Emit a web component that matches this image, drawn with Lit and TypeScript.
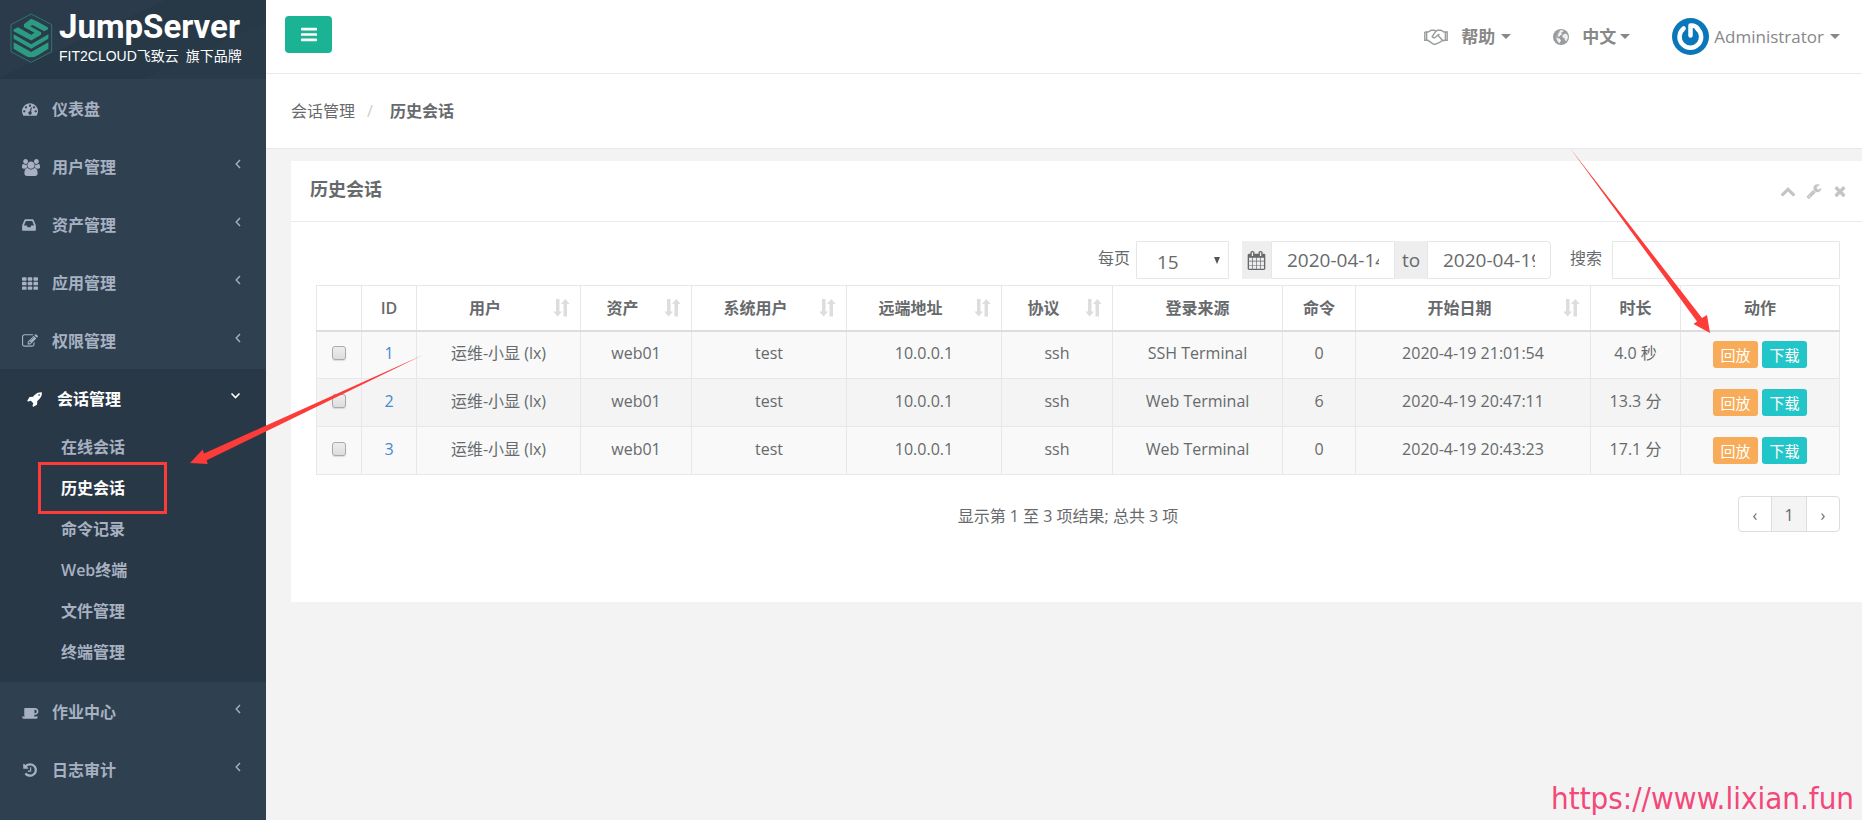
import { LitElement, html, css, svg, nothing } from "lit";
import { customElement, property, state } from "lit/decorators.js";
import { classMap } from "lit/directives/class-map.js";

const ICONS: Record<string, { w: number; d: string }> = {
  dashboard: { w: 1792, d: "M384 1152q0-53-37.5-90.5t-90.5-37.5-90.5 37.5-37.5 90.5 37.5 90.5 90.5 37.5 90.5-37.5 37.5-90.5zm192-448q0-53-37.5-90.5t-90.5-37.5-90.5 37.5-37.5 90.5 37.5 90.5 90.5 37.5 90.5-37.5 37.5-90.5zm428 481l101-382q6-26-7.5-48.5t-38.5-29.5-48 6.5-30 39.5l-101 382q-60 5-107 43.5t-63 98.5q-20 77 20 146t117 89 146-20 89-117q16-60-6-117t-72-91zm660-33q0-53-37.5-90.5t-90.5-37.5-90.5 37.5-37.5 90.5 37.5 90.5 90.5 37.5 90.5-37.5 37.5-90.5zm-640-640q0-53-37.5-90.5t-90.5-37.5-90.5 37.5-37.5 90.5 37.5 90.5 90.5 37.5 90.5-37.5 37.5-90.5zm448 192q0-53-37.5-90.5t-90.5-37.5-90.5 37.5-37.5 90.5 37.5 90.5 90.5 37.5 90.5-37.5 37.5-90.5zm320 448q0 261-141 483-19 29-54 29h-1402q-35 0-54-29-141-221-141-483 0-182 71-348t191-286 286-191 348-71 348 71 286 191 191 286 71 348z" },
  users: { w: 1920, d: "M593 896q-162 5-265 128h-134q-82 0-138-40.5t-56-118.5q0-353 124-353 6 0 43.5 21t97.5 42.5 119 21.5q67 0 133-23-5 37-5 66 0 143 81 256zm1071 637q0 120-73 189.5t-194 69.5h-874q-121 0-194-69.5t-73-189.5q0-53 3.5-103.5t14-109 26.5-108.5 43-97.5 62-81 85.5-53.5 111.5-20q10 0 43 21.5t73 48 107 48 135 21.5 135-21.5 107-48 73-48 43-21.5q61 0 111.5 20t85.5 53.5 62 81 43 97.5 26.5 108.5 14 109 3.5 103.5zm-1024-1277q0 106-75 181t-181 75-181-75-75-181 75-181 181-75 181 75 75 181zm704 384q0 159-112.5 271.5t-271.5 112.5-271.5-112.5-112.5-271.5 112.5-271.5 271.5-112.5 271.5 112.5 112.5 271.5zm576 225q0 78-56 118.5t-138 40.5h-134q-103-123-265-128 81-113 81-256 0-29-5-66 66 23 133 23 59 0 119-21.5t97.5-42.5 43.5-21q124 0 124 353zm-128-609q0 106-75 181t-181 75-181-75-75-181 75-181 181-75 181 75 75 181z" },
  inbox: { w: 1536, d: "M1023 960h316q-1-3-2.5-8t-2.5-8l-212-496h-708l-212 496q-1 2-2.5 8t-2.5 8h316l95 192h320zm513 30v482q0 26-19 45t-45 19h-1408q-26 0-45-19t-19-45v-482q0-62 25-123l238-552q10-25 36.5-42t52.5-17h832q26 0 52.5 17t36.5 42l238 552q25 61 25 123z" },
  grid: { w: 1792, d: "M96 256h320q96 0 96 96v192q0 96-96 96h-320q-96 0-96-96v-192q0-96 96-96zm640 0h320q96 0 96 96v192q0 96-96 96h-320q-96 0-96-96v-192q0-96 96-96zm640 0h320q96 0 96 96v192q0 96-96 96h-320q-96 0-96-96v-192q0-96 96-96zM96 768h320q96 0 96 96v192q0 96-96 96h-320q-96 0-96-96v-192q0-96 96-96zm640 0h320q96 0 96 96v192q0 96-96 96h-320q-96 0-96-96v-192q0-96 96-96zm640 0h320q96 0 96 96v192q0 96-96 96h-320q-96 0-96-96v-192q0-96 96-96zM96 1280h320q96 0 96 96v192q0 96-96 96h-320q-96 0-96-96v-192q0-96 96-96zm640 0h320q96 0 96 96v192q0 96-96 96h-320q-96 0-96-96v-192q0-96 96-96zm640 0h320q96 0 96 96v192q0 96-96 96h-320q-96 0-96-96v-192q0-96 96-96z" },
  edit: { w: 1792, d: "M888 1184l116-116-152-152-116 116v56h96v96h56zm440-720q-16-16-33 1l-350 350q-17 17-1 33t33-1l350-350q17-17 1-33zm80 594v190q0 119-84.5 203.5t-203.5 84.5h-832q-119 0-203.5-84.5t-84.5-203.5v-832q0-119 84.5-203.5t203.5-84.5h832q63 0 117 25 15 7 18 23 3 17-9 29l-49 49q-14 14-32 8-23-6-45-6h-832q-66 0-113 47t-47 113v832q0 66 47 113t113 47h832q66 0 113-47t47-113v-126q0-13 9-22l64-64q15-15 35-7t20 29zm-96-738l288 288-672 672h-288v-288zm444 132l-92 92-288-288 92-92q28-28 68-28t68 28l152 152q28 28 28 68t-28 68z" },
  rocket: { w: 1664, d: "M1440 448q0-40-28-68t-68-28-68 28-28 68 28 68 68 28 68-28 28-68zm224-288q0 249-75.5 430.5t-253.5 360.5q-81 80-195 176l-20 379q-2 16-16 26l-384 224q-7 4-16 4-12 0-23-9l-64-64q-13-14-8-32l85-276-281-281-276 85q-3 1-9 1-14 0-23-9l-64-64q-17-19-5-39l224-384q10-14 26-16l379-20q96-114 176-195 188-187 358-258t431-71q14 0 24 9.5t10 22.5z" },
  coffee: { w: 1920, d: "M1664 832q0-80-56-136t-136-56h-64v384h64q80 0 136-56t56-136zm-1664 576h1792q0 106-75 181t-181 75h-1280q-106 0-181-75t-75-181zm1856-576q0 159-112.5 271.5t-271.5 112.5h-64v32q0 92-66 158t-158 66h-704q-92 0-158-66t-66-158v-736q0-26 19-45t45-19h1152q159 0 271.5 112.5t112.5 271.5z" },
  history: { w: 1664, d: "M1664 896q0 156-61 298t-164 245-245 164-298 61q-172 0-327-72.5t-264-204.5q-7-10-6.5-22.5t8.5-20.5l137-138q10-9 25-9 16 2 23 12 73 95 179 147t225 52q104 0 198.5-40.5t163.5-109.5 109.5-163.5 40.5-198.5-40.5-198.5-109.5-163.5-163.5-109.5-198.5-40.5q-98 0-188 35.5t-160 101.5l137 138q31 30 14 69-17 40-59 40h-448q-26 0-45-19t-19-45v-448q0-42 40-59 39-17 69 14l130 129q107-101 244.5-156.5t284.5-55.5q156 0 298 61t245 164 164 245 61 298zm-640-288v448q0 14-9 23t-23 9h-320q-14 0-23-9t-9-23v-64q0-14 9-23t23-9h224v-352q0-14 9-23t23-9h64q14 0 23 9t9 23z" },
  wrench: { w: 1792, d: "M448 1472q0-26-19-45t-45-19-45 19-19 45 19 45 45 19 45-19 19-45zm644-420l-682 682q-37 37-90 37-52 0-91-37l-106-108q-38-36-38-90 0-53 38-91l681-681q39 98 114.5 173.5t173.5 114.5zm634-435q0 39-23 106-47 134-164.5 217.5t-258.5 83.5q-185 0-316.5-131.5t-131.5-316.5 131.5-316.5 316.5-131.5q58 0 121.5 16.5t107.5 46.5q16 11 16 28t-16 28l-293 169v224l193 107q5-3 79-48.5t135.5-81 70.5-35.5q15 0 23.5 10t8.5 25z" },
  times: { w: 1792, d: "M1490 1322q0 40-28 68l-136 136q-28 28-68 28t-68-28l-294-294-294 294q-28 28-68 28t-68-28l-136-136q-28-28-28-68t28-68l294-294-294-294q-28-28-28-68t28-68l136-136q28-28 68-28t68 28l294 294 294-294q28-28 68-28t68 28l136 136q28 28 28 68t-28 68l-294 294 294 294q28 28 28 68z" },
  up: { w: 1792, d: "M1683 1331l-166 165q-19 19-45 19t-45-19l-531-531-531 531q-19 19-45 19t-45-19l-166-165q-19-19-19-45.5t19-45.5l742-741q19-19 45-19t45 19l742 741q19 19 19 45.5t-19 45.5z" },
  calendar: { w: 1792, d: "M192 1664h288v-288h-288v288zm352 0h320v-288h-320v288zm-352-352h288v-320h-288v320zm352 0h320v-320h-320v320zm-352-384h288v-288h-288v288zm736 736h320v-288h-320v288zm-384-736h320v-288h-320v288zm768 736h288v-288h-288v288zm-384-352h320v-320h-320v320zm-352-864v-288q0-13-9.5-22.5t-22.5-9.5h-64q-13 0-22.5 9.5t-9.5 22.5v288q0 13 9.5 22.5t22.5 9.5h64q13 0 22.5-9.5t9.5-22.5zm736 864h288v-320h-288v320zm-384-384h320v-288h-320v288zm384 0h288v-288h-288v288zm32-480v-288q0-13-9.5-22.5t-22.5-9.5h-64q-13 0-22.5 9.5t-9.5 22.5v288q0 13 9.5 22.5t22.5 9.5h64q13 0 22.5-9.5t9.5-22.5zm384-64v1280q0 52-38 90t-90 38h-1408q-52 0-90-38t-38-90v-1280q0-52 38-90t90-38h128v-96q0-66 47-113t113-47h64q66 0 113 47t47 113v96h384v-96q0-66 47-113t113-47h64q66 0 113 47t47 113v96h128q52 0 90 38t38 90z" },
  bars: { w: 1536, d: "M64 256h1408q64 0 64 64v128q0 64-64 64h-1408q-64 0-64-64v-128q0-64 64-64zM64 768h1408q64 0 64 64v128q0 64-64 64h-1408q-64 0-64-64v-128q0-64 64-64zM64 1280h1408q64 0 64 64v128q0 64-64 64h-1408q-64 0-64-64v-128q0-64 64-64z" },
};

/** Icon glyph; its height is the font size, its width follows the glyph. */
function icon(name: string, size = 16) {
  const i = ICONS[name];
  return html`<svg
    class="ico"
    width=${Math.round((size * i.w) / 1792)}
    height=${size}
    viewBox="0 0 ${i.w} 1792"
    aria-hidden="true"
  >${svg`<path fill="currentColor" d=${i.d}></path>`}</svg>`;
}

const FONT = css`
  :host {
    font-family: "Open Sans", "Noto Sans", "Noto Sans CJK SC", sans-serif;
    font-size: 16px;
    line-height: 24px;
    color: #676a6c;
  }
  *,
  *::before,
  *::after {
    box-sizing: border-box;
  }
  a {
    color: inherit;
    text-decoration: none;
  }
  button,
  input,
  select {
    font: inherit;
    color: inherit;
    margin: 0;
  }
  button {
    cursor: pointer;
    border: 0;
    padding: 0;
    background: none;
  }
  ul {
    list-style: none;
    margin: 0;
    padding: 0;
  }
  .ico {
    display: block;
    flex: none;
  }
`;

interface MenuEntry {
  label: string;
  icon: string;
  children?: string[];
  leaf?: boolean;
}

const MENU: MenuEntry[] = [
  { label: "仪表盘", icon: "dashboard", leaf: true },
  { label: "用户管理", icon: "users" },
  { label: "资产管理", icon: "inbox" },
  { label: "应用管理", icon: "grid" },
  { label: "权限管理", icon: "edit" },
  {
    label: "会话管理",
    icon: "rocket",
    children: ["在线会话", "历史会话", "命令记录", "Web终端", "文件管理", "终端管理"],
  },
  { label: "作业中心", icon: "coffee" },
  { label: "日志审计", icon: "history" },
];

@customElement("side-menu")
export class SideMenu extends LitElement {
  @property() current = "历史会话";

  static styles = [
    FONT,
    css`
      :host {
        display: block;
        background: #2f4050;
        color: #a7b1c2;
        font-weight: 600;
      }
      .brand {
        display: flex;
        gap: 6px;
        height: 79px;
        padding: 7px 10px;
        color: #fff;
        background: linear-gradient(155deg, #2b3b4b 0 38%, #273847 38% 72%, #293a49 72%);
      }
      .mark {
        flex: none;
        margin-top: 6px;
      }
      .words {
        display: flex;
        flex-direction: column;
      }
      .name {
        font: 700 33px/40px Roboto, sans-serif;
      }
      .tag {
        display: flex;
        gap: 7px;
        font: 400 14px/18px "Liberation Sans", "Noto Sans CJK SC", sans-serif;
      }
      .item {
        display: flex;
        align-items: center;
        height: 58px;
        padding: 2px 25px 0 22px;
      }
      .glyph {
        width: 30px;
      }
      .label {
        flex: 1;
      }
      .arrow {
        margin-bottom: 6px;
      }
      .open {
        background: #293846;
        padding-bottom: 9px;
      }
      .open .item {
        color: #fff;
        padding-left: 27px;
      }
      .sub {
        display: flex;
        align-items: center;
        position: relative;
        height: 41px;
        padding: 0 0 2px 61px;
      }
      .sub.on {
        color: #fff;
      }
      .frame {
        position: absolute;
        inset: -6px auto -5px 38px;
        width: 129px;
        border: 3px solid #fd3b38;
      }
    `,
  ];

  private sub(label: string) {
    const on = label === this.current;
    return html`<li>
      <a class=${classMap({ sub: true, on })} href="#">
        ${label}${on ? html`<span class="frame"></span>` : nothing}
      </a>
    </li>`;
  }

  render() {
    return html`
      <div class="brand">
        <svg class="mark" width="43" height="50" viewBox="17 13 128 151" aria-hidden="true">
          <path d="M80 16 142 48V130L80 162 19 130V48Z" fill="none" stroke="#2a8577" stroke-width="2.5" />
          <path
            d="M27 63 40 56 80 79 90 73 58 55 58 47 80 30 97 38 131 57 131 62 119 68 84 49 77 53 110 71 110 79 80 96 27 68Z"
            fill="#2b9c82"
          />
          <path
            d="M27 77 80 107 132 77V91L80 121 27 91ZM27 101 80 131 132 101V121L104 138Q80 155 56 138L27 121Z"
            fill="#2b9c82"
          />
        </svg>
        <div class="words">
          <span class="name">JumpServer</span>
          <span class="tag"><span>FIT2CLOUD飞致云</span><span>旗下品牌</span></span>
        </div>
      </div>
      <nav>
        <ul>
          ${MENU.map(
            (m) => html`<li class=${classMap({ open: !!m.children })}>
              <a class="item" href="#">
                <span class="glyph">${icon(m.icon, m.icon === "users" ? 17 : 16)}</span>
                <span class="label">${m.label}</span>
                ${m.leaf
                  ? nothing
                  : m.children
                    ? html`<svg class="arrow" width="11" height="8" viewBox="0 0 11 8" aria-hidden="true">
                        <path d="M1.5 1.5 5.5 5.5 9.5 1.5" fill="none" stroke="currentColor" stroke-width="1.6" />
                      </svg>`
                    : html`<svg class="arrow" width="6" height="10" viewBox="0 0 6 10" aria-hidden="true">
                        <path d="M5 1 1.2 5 5 9" fill="none" stroke="currentColor" stroke-width="1.4" />
                      </svg>`}
              </a>
              ${m.children ? html`<ul>${m.children.map((c) => this.sub(c))}</ul>` : nothing}
            </li>`,
          )}
        </ul>
      </nav>
    `;
  }
}

@customElement("top-bar")
export class TopBar extends LitElement {
  static styles = [
    FONT,
    css`
      :host {
        display: flex;
        align-items: center;
        justify-content: space-between;
        height: 74px;
        padding: 0 22px 0 19px;
        background: #fff;
        border-bottom: 1px solid #e7eaec;
        color: #888;
      }
      .toggle {
        display: flex;
        align-items: center;
        justify-content: center;
        width: 47px;
        height: 37px;
        margin-bottom: 4px;
        border-radius: 4px;
        background: #1ab394;
        color: #fff;
      }
      .links {
        display: flex;
        align-items: center;
        gap: 42px;
      }
      .link {
        display: flex;
        align-items: center;
        font-size: 17px;
        font-weight: 700;
      }
      .lead {
        margin-right: 13px;
        color: #999c9e;
      }
      .caret {
        margin-left: 6px;
        border: 5px solid transparent;
        border-top-color: currentColor;
        border-bottom: 0;
      }
      .tight {
        margin-left: 4px;
      }
      .user {
        font-weight: 400;
      }
      .avatar {
        margin-right: 5px;
      }
    `,
  ];

  render() {
    return html`
      <button class="toggle" aria-label="菜单">${icon("bars", 19)}</button>
      <div class="links">
        <a class="link" href="#">
          <svg class="lead" width="24" height="16" viewBox="0 0 24 16" fill="none" stroke="currentColor" stroke-width="1.4" aria-hidden="true">
            <path d="M.8 3H4L7.2 1.3H10.300L12 2.200 13.600 1.200H17L20 3H23.200V11.300H20.400L18.500 12" />
            <path d="M.8 3V11.300H3.800L9 14.800Q11.500 16 13.500 14.300L16 13.200 18.500 11.200 13.800 6.300 11.400 8.300Q9.500 9.500 8.200 7.600L12 2.200" />
            <path d="M13.800 6.300 15.500 5M2.600 3V11M21.400 3V11" />
          </svg>
          帮助<span class="caret"></span>
        </a>
        <a class="link" href="#">
          <svg class="lead" width="16" height="16" viewBox="0 0 16 16" aria-hidden="true">
            <circle cx="8" cy="8" r="8" fill="currentColor" />
            <path
              d="M6 1.600 9.500 1 11 2 9.800 3.200 8 3.400 9 5.200 7.300 6.300 6.300 8 4.800 8.200 6.800 9.800 7.400 11 6 13.600 5 12.500 4.600 10.400 3 8.600Z"
              fill="#fff"
              fill-opacity=".25"
            />
            <path
              d="M7.500 1.200 10.500 1.500 9.500 3 8 3.400 9 5.200 7.300 6.300 6.500 7.500 4.800 6.800 5.600 4.800ZM10.300 5.500 12.600 4.600 14.600 6 14.900 9 13.300 12 11.900 11.400 11.600 9.200 9.800 8.600 9.300 6.800ZM3 9 6.800 9.800 8 11.500 6.600 14.300 5 13Z"
              fill="#fff"
              fill-opacity=".85"
            />
          </svg>
          中文<span class="caret tight"></span>
        </a>
        <a class="link user" href="#">
          <svg class="avatar" width="37" height="37" viewBox="0 0 37 37" aria-hidden="true">
            <circle cx="18.500" cy="18.500" r="18.500" fill="#0a77bb" />
            <path d="M12 10.500A10.800 10.800 0 1 0 25.500 10.500" transform="translate(-.4 0)" fill="none" stroke="#fff" stroke-width="4.500" stroke-linecap="round" />
            <path d="M18.500 7.500V17.500M18.500 7.500Q23.500 7 26 11" fill="none" stroke="#fff" stroke-width="4.500" stroke-linecap="round" />
          </svg>
          Administrator<span class="caret"></span>
        </a>
      </div>
    `;
  }
}

interface Session {
  id: number;
  cells: string[];
}

const COLUMNS: { title: string; width: number; sort?: boolean }[] = [
  { title: "", width: 45 },
  { title: "ID", width: 55 },
  { title: "用户", width: 164, sort: true },
  { title: "资产", width: 111, sort: true },
  { title: "系统用户", width: 155, sort: true },
  { title: "远端地址", width: 155, sort: true },
  { title: "协议", width: 111, sort: true },
  { title: "登录来源", width: 170 },
  { title: "命令", width: 73 },
  { title: "开始日期", width: 235, sort: true },
  { title: "时长", width: 90 },
  { title: "动作", width: 159 },
];
const TOTAL = COLUMNS.reduce((sum, c) => sum + c.width, 0);

const SESSIONS: Session[] = [
  { id: 1, cells: ["运维-小显 (lx)", "web01", "test", "10.0.0.1", "ssh", "SSH Terminal", "0", "2020-4-19 21:01:54", "4.0 秒"] },
  { id: 2, cells: ["运维-小显 (lx)", "web01", "test", "10.0.0.1", "ssh", "Web Terminal", "6", "2020-4-19 20:47:11", "13.3 分"] },
  { id: 3, cells: ["运维-小显 (lx)", "web01", "test", "10.0.0.1", "ssh", "Web Terminal", "0", "2020-4-19 20:43:23", "17.1 分"] },
];

@customElement("session-panel")
export class SessionPanel extends LitElement {
  @state() private rows = SESSIONS;

  static styles = [
    FONT,
    css`
      :host {
        display: block;
        background: #fff;
      }
      .head {
        display: flex;
        align-items: center;
        justify-content: space-between;
        height: 61px;
        padding: 0 14px 4px 19px;
        border-bottom: 1px solid #e7eaec;
      }
      .title {
        margin: 0;
        font-size: 18px;
        font-weight: 600;
      }
      .tools {
        display: flex;
        align-items: center;
        gap: 10px;
        padding-top: 4px;
        color: #c4c4c4;
      }
      .body {
        padding: 19px 22px 70px 25px;
      }
      .filters {
        display: flex;
        justify-content: flex-end;
        margin-bottom: 6px;
      }
      .filters label {
        margin: 5px 6px 0 0;
      }
      .filters .find {
        margin: 5px 10px 0 19px;
      }
      .box {
        height: 38px;
        background: #fff;
        border: 1px solid #e5e6e7;
        border-radius: 1px;
        padding: 0 15px;
        font-size: 19px;
      }
      .pick {
        position: relative;
        margin-right: 13px;
      }
      .pick .box {
        appearance: none;
        width: 93px;
        padding: 4px 20px 0;
        line-height: 28px;
      }
      .pick::after {
        content: "";
        position: absolute;
        right: 9px;
        top: 16px;
        border: 3px solid transparent;
        border-width: 7px 3px 0;
        border-top-color: #555;
        pointer-events: none;
      }
      .range {
        display: flex;
      }
      .range .box {
        width: 124px;
      }
      .range .box:last-child {
        border-radius: 0 4px 4px 0;
      }
      .addon {
        display: flex;
        align-items: center;
        justify-content: center;
        height: 38px;
        background: #eee;
        font-size: 19px;
      }
      .cal {
        width: 29px;
      }
      .to {
        width: 32px;
      }
      .search {
        width: 228px;
      }
      table {
        width: 100%;
        table-layout: fixed;
        border-collapse: collapse;
        text-align: center;
      }
      th,
      td {
        border: 1px solid #e7e7e7;
      }
      th {
        height: 45px;
        padding: 1px 0 0;
        font-weight: 600;
        border-bottom: 2px solid #ddd;
      }
      td {
        height: 48px;
        padding: 0 0 3px;
      }
      tbody tr {
        background: #f9f9f9;
      }
      tbody tr:nth-child(even) {
        background: #f4f4f4;
      }
      .sortable {
        display: flex;
        align-items: center;
        padding-right: 10px;
      }
      .sortable span {
        flex: 1;
      }
      .id {
        color: #428bca;
      }
      .check {
        appearance: none;
        display: block;
        width: 14px;
        height: 14px;
        margin: 0 auto;
        border: 1px solid #aaa;
        border-radius: 3px;
        background: linear-gradient(#eee, #dcdcdc);
        box-shadow: 0 1px 1px rgba(0, 0, 0, 0.12);
      }
      .acts {
        display: flex;
        justify-content: center;
        gap: 4px;
        padding-top: 3px;
      }
      .act {
        width: 45px;
        height: 27px;
        border-radius: 3px;
        color: #fff;
        font-size: 15px;
        background: #f8ac59;
      }
      .act.down {
        background: #23c6c8;
      }
      .foot {
        display: grid;
        grid-template-columns: 1fr auto 1fr;
        align-items: center;
        margin-top: 21px;
      }
      .info {
        grid-column: 2;
        padding: 4px 20px 0 0;
      }
      .pages {
        display: flex;
        justify-self: end;
        border: 1px solid #ddd;
        border-radius: 4px;
      }
      .page {
        display: block;
        width: 32px;
        height: 34px;
        line-height: 36px;
        text-align: center;
      }
      .page.on {
        width: 36px;
        background: #f4f4f4;
        border: solid #ddd;
        border-width: 0 1px;
      }
    `,
  ];

  render() {
    return html`
      <div class="head">
        <h5 class="title">历史会话</h5>
        <div class="tools">
          <button aria-label="折叠">${icon("up", 16)}</button>
          <button aria-label="设置">${icon("wrench", 16)}</button>
          <button aria-label="关闭">${icon("times", 16)}</button>
        </div>
      </div>
      <div class="body">
        <div class="filters">
          <label for="size">每页</label>
          <div class="pick">
            <select id="size" class="box">
              <option>15</option>
              <option>25</option>
              <option>50</option>
            </select>
          </div>
          <div class="range">
            <span class="addon cal">${icon("calendar", 19)}</span>
            <input class="box" aria-label="开始日期" value="2020-04-14" />
            <span class="addon to">to</span>
            <input class="box" aria-label="结束日期" value="2020-04-19" />
          </div>
          <label class="find" for="search">搜索</label>
          <input id="search" class="box search" />
        </div>
        <table>
          <colgroup>
            ${COLUMNS.map((c) => html`<col style="width:${(c.width / TOTAL) * 100}%" />`)}
          </colgroup>
          <thead>
            <tr>
              ${COLUMNS.map((c) =>
                c.sort
                  ? html`<th>
                      <div class="sortable">
                        <span>${c.title}</span>
                        <svg width="17" height="18" viewBox="0 0 17 18" fill="#ddd" aria-hidden="true">
                          <path d="M3 0H6.500V12.500H9L4.700 17.500.3 12.500H3ZM10.500 17.500V5H8L12.300 0 16.700 5H14V17.500Z" />
                        </svg>
                      </div>
                    </th>`
                  : html`<th>${c.title}</th>`,
              )}
            </tr>
          </thead>
          <tbody>
            ${this.rows.map(
              (r) => html`<tr>
                <td><input class="check" type="checkbox" aria-label="选择 ${r.id}" /></td>
                <td><a class="id" href="#">${r.id}</a></td>
                ${r.cells.map((c) => html`<td>${c}</td>`)}
                <td>
                  <div class="acts">
                    <button class="act">回放</button>
                    <button class="act down">下载</button>
                  </div>
                </td>
              </tr>`,
            )}
          </tbody>
        </table>
        <div class="foot">
          <span class="info">显示第 1 至 3 项结果; 总共 3 项</span>
          <nav class="pages">
            <a class="page" href="#">‹</a>
            <a class="page on" href="#">1</a>
            <a class="page" href="#">›</a>
          </nav>
        </div>
      </div>
    `;
  }
}

@customElement("app-root")
export class AppRoot extends LitElement {
  static styles = [
    FONT,
    css`
      :host {
        display: grid;
        grid-template-columns: 266px 1fr;
        position: relative;
        min-height: 100vh;
        background: #f3f3f4;
        overflow: hidden;
      }
      .main {
        display: flex;
        flex-direction: column;
        min-width: 0;
        background: #f3f3f3;
      }
      .crumbs {
        display: flex;
        align-items: center;
        height: 75px;
        padding: 0 25px;
        background: #fff;
        border-bottom: 1px solid #e7eaec;
      }
      .slash {
        padding: 0 17px 0 12px;
        color: #ccc;
      }
      .here {
        font-weight: 600;
      }
      .panel {
        margin: 12px 0 0 25px;
      }
      .site {
        margin: auto 8px 4px auto;
        font: 31px/36px "DejaVu Sans Condensed", "DejaVu Sans", sans-serif;
        color: #f4477a;
      }
      .pointer {
        position: absolute;
        pointer-events: none;
        fill: #fd3b38;
      }
      .to-history {
        left: 190px;
        top: 355px;
      }
      .to-replay {
        right: 151px;
        top: 148px;
      }
    `,
  ];

  render() {
    return html`
      <side-menu></side-menu>
      <div class="main">
        <top-bar></top-bar>
        <nav class="crumbs">
          <a href="#">会话管理</a>
          <span class="slash">/</span>
          <span class="here">历史会话</span>
        </nav>
        <session-panel class="panel"></session-panel>
        <a class="site" href="#">https://www.lixian.fun</a>
      </div>
      <svg class="pointer to-history" width="234" height="110" viewBox="0 0 234 110" aria-hidden="true">
        <path d="M233 0 14 98.500 12.700 94.500 0 108 17.700 109 16.700 105.300Z" />
      </svg>
      <svg class="pointer to-replay" width="141" height="185" viewBox="0 0 141 185" aria-hidden="true">
        <path d="M0 0 132 170 137 167 140 185 123.500 176 127 173.500Z" />
      </svg>
    `;
  }
}
